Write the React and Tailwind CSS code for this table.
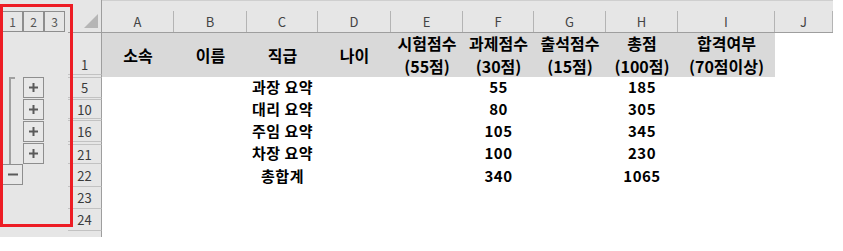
import React from "react";

const cols = [
  { l: "A", w: "w-[72px]" },
  { l: "B", w: "w-[73px]" },
  { l: "C", w: "w-[71px]" },
  { l: "D", w: "w-[73px]" },
  { l: "E", w: "w-[72px]" },
  { l: "F", w: "w-[71px]" },
  { l: "G", w: "w-[72px]" },
  { l: "H", w: "w-[72px]" },
  { l: "I", w: "w-[97px]" },
  { l: "J", w: "w-[58px]" },
];

const head = [
  ["소속"],
  ["이름"],
  ["직급"],
  ["나이"],
  ["시험점수", "(55점)"],
  ["과제점수", "(30점)"],
  ["출석점수", "(15점)"],
  ["총점", "(100점)"],
  ["합격여부", "(70점이상)"],
  null,
];

const rows = [
  { n: "5", main: "h-[20px]", sep: "h-[2px]", shift: "pb-[3px]", c: "과장 요약", f: "55", h: "185" },
  { n: "10", main: "h-[19px]", sep: "h-[2px]", shift: "pb-[2px]", c: "대리 요약", f: "80", h: "305" },
  { n: "16", main: "h-[21px]", sep: "h-[3px]", shift: "pb-[2px]", c: "주임 요약", f: "105", h: "345" },
  { n: "21", main: "h-[19px]", shift: "pb-[4px]", c: "차장 요약", f: "100", h: "230" },
  { n: "22", main: "h-[23px]", shift: "pb-0", c: "총합계", f: "340", h: "1065" },
  { n: "23", main: "h-[22px]", shift: "pb-0" },
  { n: "24", main: "h-[22px]", shift: "pb-0" },
];

const font = "font-['Noto_Sans_CJK_KR','Noto_Sans',sans-serif]";

function PlusBox() {
  return (
    <div className="w-[21px] h-[21px] border border-[#8e8e8e] bg-[#e8e8e8] flex items-center justify-center">
      <svg width="9" height="9" viewBox="0 0 9 9">
        <rect x="3.5" y="0" width="2" height="9" fill="#5a5a5a" />
        <rect x="0" y="3.5" width="9" height="2" fill="#5a5a5a" />
      </svg>
    </div>
  );
}

function MinusBox() {
  return (
    <div className="w-[21px] h-[21px] border border-[#8e8e8e] bg-[#e8e8e8] flex items-center justify-center">
      <svg width="10" height="9" viewBox="0 0 10 9">
        <rect x="0" y="3.5" width="10" height="2" fill="#5a5a5a" />
      </svg>
    </div>
  );
}

function LeftPanel() {
  return (
    <div className={`w-[68px] h-[237px] bg-[#e6e6e6] shrink-0 flex flex-col ${font}`}>
      <div className="flex pt-[11px] pl-[2px]">
        {["1", "2", "3"].map((t) => (
          <div
            key={t}
            className="w-[21px] h-[21px] border border-[#8e8e8e] flex items-center justify-center text-[12px] leading-none text-[#555]"
          >
            {t}
          </div>
        ))}
      </div>
      <div className="flex mt-[45px]">
        <div className="ml-[9px] w-[6px] h-[88px] border-l-2 border-t-2 border-[#a0a0a0]" />
        <div className="ml-[8px] flex flex-col gap-[1px]">
          <PlusBox />
          <PlusBox />
          <PlusBox />
          <PlusBox />
        </div>
      </div>
      <div className="ml-[2px] -mt-[1px]">
        <MinusBox />
      </div>
    </div>
  );
}

function RowHeader({ main, sep, n }) {
  return (
    <div className="w-[34px] shrink-0 flex flex-col bg-[#e6e6e6]">
      <div
        className={`${main} border-b border-r border-b-[#c2c2c2] border-r-[#9e9e9e] flex items-center justify-center text-[13px] leading-none text-[#3a3a3a]`}
      >
        {n}
      </div>
      {sep && <div className={`${sep} border-b border-r border-b-[#c2c2c2] border-r-[#9e9e9e]`} />}
    </div>
  );
}

export default function App() {
  return (
    <div className={`w-[843px] h-[251px] bg-white relative overflow-hidden flex ${font}`}>
      <LeftPanel />
      <div className="flex flex-col">
        {/* column header */}
        <div className="flex h-[33px] border-b border-[#9e9e9e]">
          <div className="w-[34px] border-r border-[#9e9e9e] bg-[#e6e6e6] flex items-end justify-end pr-[3px] pb-[4px]">
            <svg width="14" height="14" viewBox="0 0 14 14">
              <polygon points="14,0 14,14 0,14" fill="#b6b6b6" />
            </svg>
          </div>
          {cols.map((c) => (
            <div key={c.l} className={`${c.w} bg-[#e6e6e6] border-t border-[#cfcfcf] flex flex-col`}>
              <div className="h-[10px]" />
              <div className="flex-1 border-r border-[#b4b4b4] flex items-center justify-center text-[13px] leading-none text-[#444]">
                {c.l}
              </div>
            </div>
          ))}
        </div>
        {/* row 1 */}
        <div className="flex h-[45px]">
          <div className="w-[34px] shrink-0 flex flex-col bg-[#e6e6e6]">
            <div className="h-[42px] border-b border-r border-b-[#c2c2c2] border-r-[#9e9e9e] flex items-end justify-center pb-[3px] text-[13px] leading-none text-[#3a3a3a]">
              1
            </div>
            <div className="h-[3px] border-b border-r border-b-[#c2c2c2] border-r-[#9e9e9e]" />
          </div>
          {cols.map((c, i) => (
            <div
              key={c.l}
              className={`${c.w} h-[44px] ${head[i] ? "bg-[#d9d9d9]" : "bg-white"} flex flex-col items-center justify-center text-[16px] leading-[23px] font-bold text-black whitespace-nowrap`}
            >
              {head[i] && head[i].map((t) => <div key={t}>{t}</div>)}
            </div>
          ))}
        </div>
        {rows.map((r) => (
          <div key={r.n} className="flex">
            <RowHeader main={r.main} sep={r.sep} n={r.n} />
            <div className="flex">
              {cols.map((c) => {
                let v = null;
                if (c.l === "C") v = r.c;
                if (c.l === "F") v = r.f;
                if (c.l === "H") v = r.h;
                return (
                  <div
                    key={c.l}
                    className={`${c.w} ${r.main} ${r.shift} flex items-center justify-center text-[15px] tracking-[0.5px] leading-none font-bold text-black whitespace-nowrap`}
                  >
                    {v}
                  </div>
                );
              })}
            </div>
          </div>
        ))}
        <div className="flex h-[6px]">
          <div className="w-[34px] bg-[#e6e6e6] border-r border-[#9e9e9e]" />
        </div>
      </div>
      <div className="absolute left-0 top-[4px] w-[73px] h-[223px] border-[3px] border-[#ed1c24] pointer-events-none" />
    </div>
  );
}
